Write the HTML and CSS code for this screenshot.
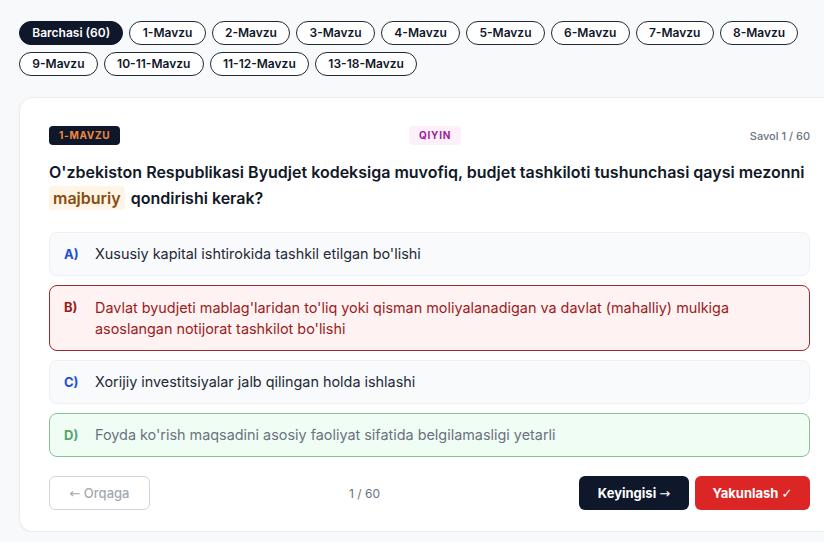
FILE: index.html
```html
<!DOCTYPE html>
<html lang="uz">
<head>
<meta charset="utf-8">
<title>Test</title>
<link rel="stylesheet" href="styles.css">
</head>
<body>
<div class="page">
  <div class="pills">
    <button class="pill active">Barchasi (60)</button>
    <button class="pill">1-Mavzu</button>
    <button class="pill">2-Mavzu</button>
    <button class="pill">3-Mavzu</button>
    <button class="pill">4-Mavzu</button>
    <button class="pill">5-Mavzu</button>
    <button class="pill">6-Mavzu</button>
    <button class="pill">7-Mavzu</button>
    <button class="pill">8-Mavzu</button>
    <button class="pill">9-Mavzu</button>
    <button class="pill">10-11-Mavzu</button>
    <button class="pill">11-12-Mavzu</button>
    <button class="pill">13-18-Mavzu</button>
  </div>

  <div class="card">
    <div class="card-head">
      <span class="topic">1-MAVZU</span>
      <span class="level">QIYIN</span>
      <span class="counter">Savol 1 / 60</span>
    </div>
    <p class="question">O'zbekiston Respublikasi Byudjet kodeksiga muvofiq, budjet tashkiloti tushunchasi qaysi mezonni <span class="mark">majburiy</span> qondirishi kerak?</p>

    <div class="options">
      <div class="option">
        <span class="letter">A)</span>
        <span class="text">Xususiy kapital ishtirokida tashkil etilgan bo'lishi</span>
      </div>
      <div class="option wrong">
        <span class="letter">B)</span>
        <span class="text">Davlat byudjeti mablag'laridan to'liq yoki qisman moliyalanadigan va davlat (mahalliy) mulkiga asoslangan notijorat tashkilot bo'lishi</span>
      </div>
      <div class="option">
        <span class="letter">C)</span>
        <span class="text">Xorijiy investitsiyalar jalb qilingan holda ishlashi</span>
      </div>
      <div class="option right">
        <span class="letter">D)</span>
        <span class="text">Foyda ko'rish maqsadini asosiy faoliyat sifatida belgilamasligi yetarli</span>
      </div>
    </div>

    <div class="card-foot">
      <button class="btn back"><span class="glyph">←</span> Orqaga</button>
      <span class="progress">1 / 60</span>
      <div class="actions">
        <button class="btn next">Keyingisi <span class="glyph">→</span></button>
        <button class="btn finish">Yakunlash <span class="glyph">✓</span></button>
      </div>
    </div>
  </div>
</div>
</body>
</html>
```

FILE: styles.css
```css
html, body {
  margin: 0;
  padding: 0;
  overflow: hidden;
}
body {
  background: #f8f9fb;
  font-family: Inter, "Noto Sans", "Liberation Sans", sans-serif;
  color: #111827;
}
.page {
  padding: 21px 0 0 19px;
  width: 821px;
}
.pills {
  display: flex;
  flex-wrap: wrap;
  gap: 7px 6px;
}
.pill {
  height: 24px;
  box-sizing: border-box;
  border: 1px solid #1f2937;
  border-radius: 12px;
  background: #fff;
  color: #0f172a;
  font-family: inherit;
  font-size: 12px;
  font-weight: 600;
  padding: 0 12.3px;
  line-height: 22px;
}
.pill.active {
  background: #0f172a;
  color: #fff;
  border-color: #0f172a;
}
.card {
  margin-top: 21px;
  width: 821px;
  box-sizing: border-box;
  background: #fff;
  border: 1px solid #eceef1;
  border-radius: 14px;
  box-shadow: 0 1px 3px rgba(15, 23, 42, 0.05);
  padding: 28px 29px 21px 29px;
}
.card-head {
  display: flex;
  justify-content: space-between;
  align-items: center;
  height: 19px;
}
.topic {
  background: #0f172a;
  color: #f0883e;
  font-size: 10px;
  font-weight: 700;
  letter-spacing: 0.7px;
  padding: 0 10px;
  height: 19px;
  line-height: 19px;
  border-radius: 4px;
}
.level {
  background: #fdf0fb;
  color: #a21c93;
  font-size: 10px;
  font-weight: 700;
  letter-spacing: 0.8px;
  padding: 0 10px;
  height: 19px;
  line-height: 19px;
  border-radius: 4px;
}
.counter {
  color: #6b7280;
  font-size: 11px;
  font-weight: 500;
}
.question {
  margin: 14px 0 21px;
  font-size: 16px;
  font-weight: 600;
  line-height: 26px;
  color: #111827;
}
.mark {
  background: #fff5e6;
  color: #8a4b12;
  padding: 2px 4px;
  border-radius: 4px;
  margin-right: 2px;
}
.options {
  display: flex;
  flex-direction: column;
  gap: 9px;
}
.option {
  display: flex;
  align-items: flex-start;
  background: #f8fafc;
  border: 1px solid #eef0f3;
  border-radius: 8px;
  padding: 11px 14px;
  font-size: 14.4px;
  line-height: 20px;
  color: #1f2937;
}
.letter {
  width: 31px;
  flex: none;
  font-weight: 700;
  font-size: 13px;
  color: #1d4ed8;
}
.option.wrong {
  background: #fef2f2;
  border-color: #a12a2a;
  color: #9b1c1c;
  line-height: 21px;
}
.option.wrong .letter {
  color: #991b1b;
}
.option.right {
  background: #f0fdf4;
  border-color: #8cbf98;
  color: #6b7280;
}
.option.right .letter {
  color: #55a56c;
}
.card-foot {
  margin-top: 19px;
  display: flex;
  justify-content: space-between;
  align-items: center;
}
.btn {
  height: 34px;
  box-sizing: border-box;
  border-radius: 6px;
  font-family: inherit;
  font-size: 13px;
  padding: 0 8px;
  border: 1px solid transparent;
  white-space: nowrap;
  text-align: center;
}
.glyph {
  font-family: "DejaVu Sans", sans-serif;
  font-weight: 400;
}
.finish .glyph {
  font-weight: 700;
}
.btn.back {
  width: 101px;
  background: #fff;
  border-color: #d1d5db;
  color: #a3a8b0;
  font-weight: 500;
}
.progress {
  color: #6b7280;
  font-size: 12px;
}
.actions {
  display: flex;
  gap: 6px;
}
.btn.next {
  width: 110px;
  background: #0f172a;
  color: #fff;
  font-weight: 700;
}
.btn.finish {
  width: 115px;
  background: #dc2626;
  color: #fff;
  font-weight: 700;
}
```
